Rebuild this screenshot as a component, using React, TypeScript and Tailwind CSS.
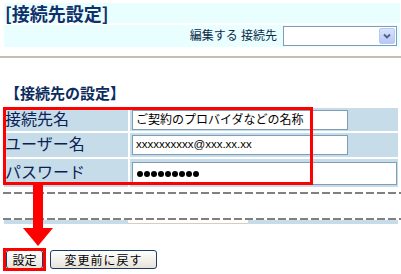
import React from "react";

const rows = [
  { label: "接続先名", h: "h-[23px]" },
  { label: "ユーザー名", h: "h-[24px]" },
  { label: "パスワード", h: "h-[28px]" },
];

const Dashes = ({ className }: { className: string }) => (
  <div
    className={`ml-[3px] h-[2px] bg-[repeating-linear-gradient(90deg,#808080_0_8px,transparent_8px_11px)] ${className}`}
  />
);

const App: React.FC = () => {
  return (
    <div className="relative w-[401px] h-[274px] overflow-hidden bg-white font-['Liberation_Sans','Noto_Sans_CJK_JP',sans-serif]">
      {/* top header */}
      <div className="pt-[3px] pl-[4px] pr-[1px]">
        <div className="h-[20px] bg-[#e9ffff] pl-[1px] text-[18px] leading-[20px] font-bold text-[#10306a] font-['Noto_Sans_CJK_JP',sans-serif]">
          [接続先設定]
        </div>
        <div className="mt-[2px] h-[22px] bg-[#e9ffff] flex items-center justify-end pr-[3px]">
          <span className="text-[12px] leading-[14px] text-[#0b2a4a]">編集する 接続先</span>
          <div className="ml-[6px] w-[114px] h-[20px] border border-[#7f9db9] bg-white flex items-center justify-end pr-[1px]">
            <div className="w-[16px] h-[16px] rounded-[2px] border border-[#b9c9f0] bg-gradient-to-b from-[#d9e3fd] to-[#b6c8f7] flex items-center justify-center">
              <svg width="8" height="6" viewBox="0 0 8 6">
                <path d="M1 1.5 L4 4.5 L7 1.5" fill="none" stroke="#4d6185" strokeWidth="1.8" />
              </svg>
            </div>
          </div>
        </div>
      </div>
      <div className="mt-[9px] h-[2px] bg-[#c4bfae]" />

      {/* section heading */}
      <div className="mt-[26px] h-[18px] pl-[5px] text-[15px] leading-[18px] font-bold text-[#0d2c5e] font-['Noto_Sans_CJK_JP',sans-serif]">
        【接続先の設定】
      </div>

      {/* form table */}
      <div className="mt-[6px] ml-[4px] w-[394px] flex flex-col gap-[2px]">
        {rows.map((r, i) => (
          <div key={r.label} className={`flex gap-[2px] ${r.h}`}>
            <div className="w-[124px] bg-[#c6dce8] pl-[1px] flex items-center text-[16px] leading-[18px] text-[#0a2256]">
              {r.label}
            </div>
            <div className={`flex-1 bg-[#c6dce8] pl-[2px] flex ${i === 2 ? "items-start pt-[3px]" : "items-center"}`}>
              {i === 0 && (
                <div className="w-[216px] h-[20px] border border-[#7f9db9] bg-white pl-[3px] flex items-center text-[12px] text-black">
                  ご契約のプロバイダなどの名称
                </div>
              )}
              {i === 1 && (
                <div className="w-[216px] h-[20px] border border-[#7f9db9] bg-white pl-[3px] flex items-center text-[11.5px] text-black">
                  xxxxxxxxxx@xxx.xx.xx
                </div>
              )}
              {i === 2 && (
                <div className="w-[265px] h-[23px] border border-[#7f9db9] bg-white pl-[4px] flex items-center gap-[1px]">
                  {Array.from({ length: 9 }).map((_, k) => (
                    <span key={k} className="w-[6px] h-[6px] rounded-full bg-black" />
                  ))}
                </div>
              )}
            </div>
          </div>
        ))}
      </div>

      {/* cut marks */}
      <Dashes className="mt-[5px]" />
      <Dashes className="mt-[24px]" />
      <div className="ml-[4px] w-[394px] h-[4px] flex">
        <div className="w-[124px] bg-[#c6dce8]" />
        <div className="w-[120px] bg-white border-b border-[#d6ceb8]" />
        <div className="flex-1 bg-[#c6dce8]" />
      </div>

      {/* buttons */}
      <div className="mt-[26px] pl-[6px] flex gap-[7px]">
        <button className="w-[37px] h-[19px] rounded-[3px] border border-[#1c3a6b] bg-gradient-to-b from-white to-[#e6e3d8] text-[12px] leading-[16px] text-black font-['Noto_Sans_CJK_JP',sans-serif]">
          設定
        </button>
        <button className="w-[107px] h-[19px] rounded-[3px] border border-[#1c3a6b] bg-gradient-to-b from-white to-[#e6e3d8] text-[12px] leading-[16px] tracking-[1px] text-black font-['Noto_Sans_CJK_JP',sans-serif]">
          変更前に戻す
        </button>
      </div>

      {/* annotations */}
      <div className="absolute left-[3px] top-[107px] w-[310px] h-[78px] border-[3px] border-[#ff0000]" />
      <svg className="absolute left-[23px] top-[184px]" width="30" height="62" viewBox="0 0 30 62">
        <rect x="10" y="0" width="10" height="45" fill="#ff0000" />
        <polygon points="0,44 30,44 15,62" fill="#ff0000" />
      </svg>
      <div className="absolute left-[3px] top-[248px] w-[43px] h-[23px] border-[3px] border-[#ff0000]" />
    </div>
  );
};

export default App;
